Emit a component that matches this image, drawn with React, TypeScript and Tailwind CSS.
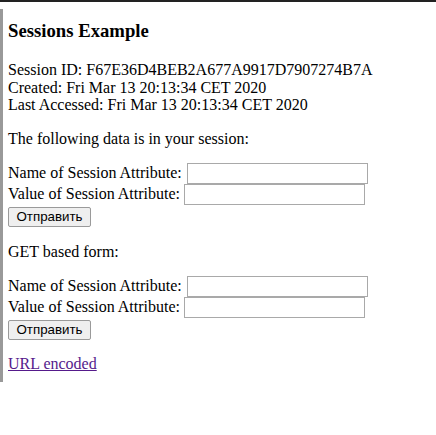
const serif = { fontFamily: '"Liberation Serif", "Times New Roman", serif' };

const Field = ({ label, first }: { label: string; first?: boolean }) => (
  <div className="flex h-[21px] items-center whitespace-nowrap">
    <span>{label}</span>
    <input
      type="text"
      className={`h-[21px] w-[181px] border border-[#a9a9a9] bg-white px-[2px] text-[13px] outline-none ${
        first ? "ml-[5px]" : "ml-[4px]"
      }`}
    />
  </div>
);

const SubmitButton = () => (
  <button
    type="button"
    className="flex h-[20px] w-[83px] items-center justify-center rounded-[2px] border border-[#9a9a9a] bg-[#efefef] text-[13.33px] leading-none text-black"
    style={{ fontFamily: '"Liberation Sans", Arial, sans-serif' }}
  >
    Отправить
  </button>
);

export default function App() {
  return (
    <div className="h-[435px] w-[436px] bg-white text-[16px] text-black" style={serif}>
      <div className="h-[2px] w-full bg-[#222]" />
      <div className="mt-[7px] border-l-[3px] border-[#999] pb-[9px] pl-[5px] pt-[11px]">
        <h3 className="h-[22px] text-[18.72px] font-bold leading-[22px]">Sessions Example</h3>

        <div className="mt-[19px] leading-[17.5px]">
          <div>Session ID: F67E36D4BEB2A677A9917D7907274B7A</div>
          <div>Created: Fri Mar 13 20:13:34 CET 2020</div>
          <div>Last Accessed: Fri Mar 13 20:13:34 CET 2020</div>
        </div>

        <p className="mt-[16px] leading-[18px]">The following data is in your session:</p>

        <form className="mt-[15px]">
          <Field label="Name of Session Attribute:" first />
          <Field label="Value of Session Attribute:" />
          <div className="mt-[2px]">
            <SubmitButton />
          </div>
        </form>

        <p className="mt-[16px] leading-[18px]">GET based form:</p>

        <form className="mt-[15px]">
          <Field label="Name of Session Attribute:" first />
          <Field label="Value of Session Attribute:" />
          <div className="mt-[2px]">
            <SubmitButton />
          </div>
        </form>

        <div className="mt-[15px] leading-[18px]">
          <a href="#" className="text-[#551a8b] underline">
            URL encoded
          </a>
        </div>
      </div>
    </div>
  );
}
